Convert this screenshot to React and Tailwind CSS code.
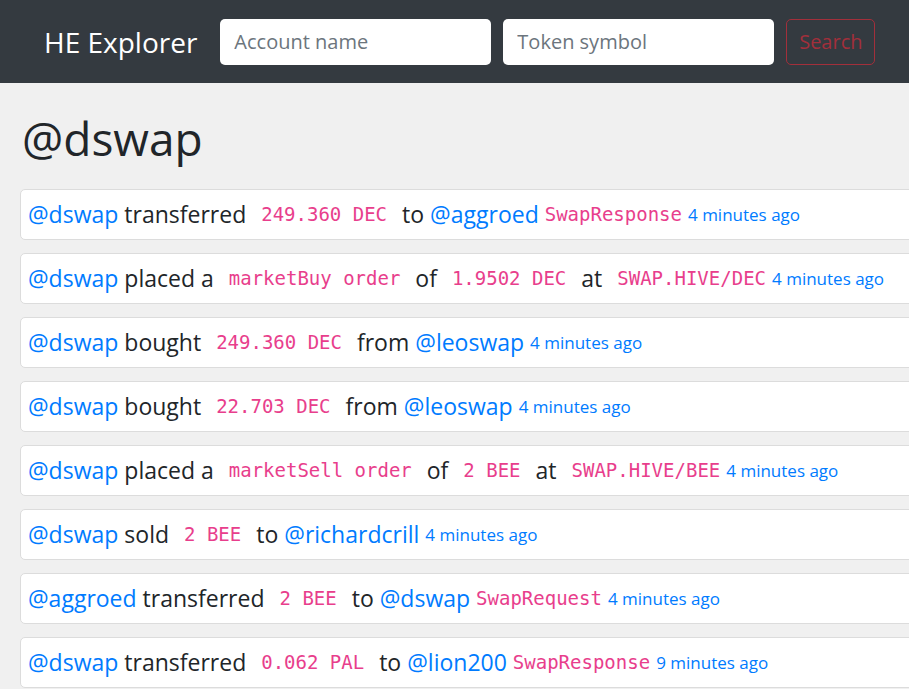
import React from "react";

const sans = { fontFamily: "'Open Sans', 'Noto Sans', sans-serif" };

const rows = [
  [["a", "@dswap"], ["t", "transferred"], ["c", "249.360 DEC"], ["t", "to"], ["a", "@aggroed"], ["m", "SwapResponse"], ["time", "4 minutes ago"]],
  [["a", "@dswap"], ["t", "placed a"], ["c", "marketBuy order"], ["t", "of"], ["c", "1.9502 DEC"], ["t", "at"], ["p", "SWAP.HIVE/DEC"], ["time", "4 minutes ago"]],
  [["a", "@dswap"], ["t", "bought"], ["c", "249.360 DEC"], ["t", "from"], ["a", "@leoswap"], ["time", "4 minutes ago"]],
  [["a", "@dswap"], ["t", "bought"], ["c", "22.703 DEC"], ["t", "from"], ["a", "@leoswap"], ["time", "4 minutes ago"]],
  [["a", "@dswap"], ["t", "placed a"], ["c", "marketSell order"], ["t", "of"], ["c", "2 BEE"], ["t", "at"], ["p", "SWAP.HIVE/BEE"], ["time", "4 minutes ago"]],
  [["a", "@dswap"], ["t", "sold"], ["c", "2 BEE"], ["t", "to"], ["a", "@richardcrill"], ["time", "4 minutes ago"]],
  [["a", "@aggroed"], ["t", "transferred"], ["c", "2 BEE"], ["t", "to"], ["a", "@dswap"], ["m", "SwapRequest"], ["time", "4 minutes ago"]],
  [["a", "@dswap"], ["t", "transferred"], ["c", "0.062 PAL"], ["t", "to"], ["a", "@lion200"], ["m", "SwapResponse"], ["time", "9 minutes ago"]],
];

const Part = ({ kind, text }) => {
  if (kind === "a") return <span className="text-[#007bff]">{text}</span>;
  if (kind === "t") return <span className="text-[#212529]">{text}</span>;
  if (kind === "c")
    return (
      <code className="font-['DejaVu_Sans_Mono',monospace] text-[19px] text-[#e83e8c] mx-[9px]">
        {text}
      </code>
    );
  if (kind === "p")
    return (
      <code className="font-['DejaVu_Sans_Mono',monospace] text-[19px] text-[#e83e8c] ml-[9px]">
        {text}
      </code>
    );
  if (kind === "m")
    return <code className="font-['DejaVu_Sans_Mono',monospace] text-[19px] text-[#e83e8c]">{text}</code>;
  return <span className="text-[17px] text-[#007bff]">{text}</span>;
};

export default function App() {
  return (
    <div className="min-h-screen bg-[#f0f0f0] overflow-hidden" style={sans}>
      <nav className="h-[83px] bg-[#343a40] flex items-center pl-[44px] gap-[12px]">
        <span className="text-white text-[28px] mr-[11px]">HE Explorer</span>
        <input
          className="w-[271px] h-[46px] bg-white rounded-[5px] px-[14px] text-[20px] placeholder:text-[#6c757d] outline-none"
          placeholder="Account name"
        />
        <input
          className="w-[271px] h-[46px] bg-white rounded-[5px] px-[14px] text-[20px] placeholder:text-[#6c757d] outline-none"
          placeholder="Token symbol"
        />
        <button className="h-[46px] w-[89px] border border-[#a22f3b] rounded-[5px] text-[#a22f3b] text-[20px]">
          Search
        </button>
      </nav>
      <main className="pl-[20px]">
        <h1 className="text-[46px] font-medium text-[#212529] pt-[26px] pb-[22px] pl-[2px] leading-[58px]">
          @dswap
        </h1>
        <div className="flex flex-col gap-[13px]">
          {rows.map((row, i) => (
            <div
              key={i}
              className="w-[900px] h-[51px] bg-white border border-[#dcdcdc] rounded-[5px] flex items-center pl-[7px] gap-[6px] text-[23px] whitespace-nowrap"
            >
              {row.map(([k, t], j) => (
                <Part key={j} kind={k} text={t} />
              ))}
            </div>
          ))}
        </div>
      </main>
    </div>
  );
}
